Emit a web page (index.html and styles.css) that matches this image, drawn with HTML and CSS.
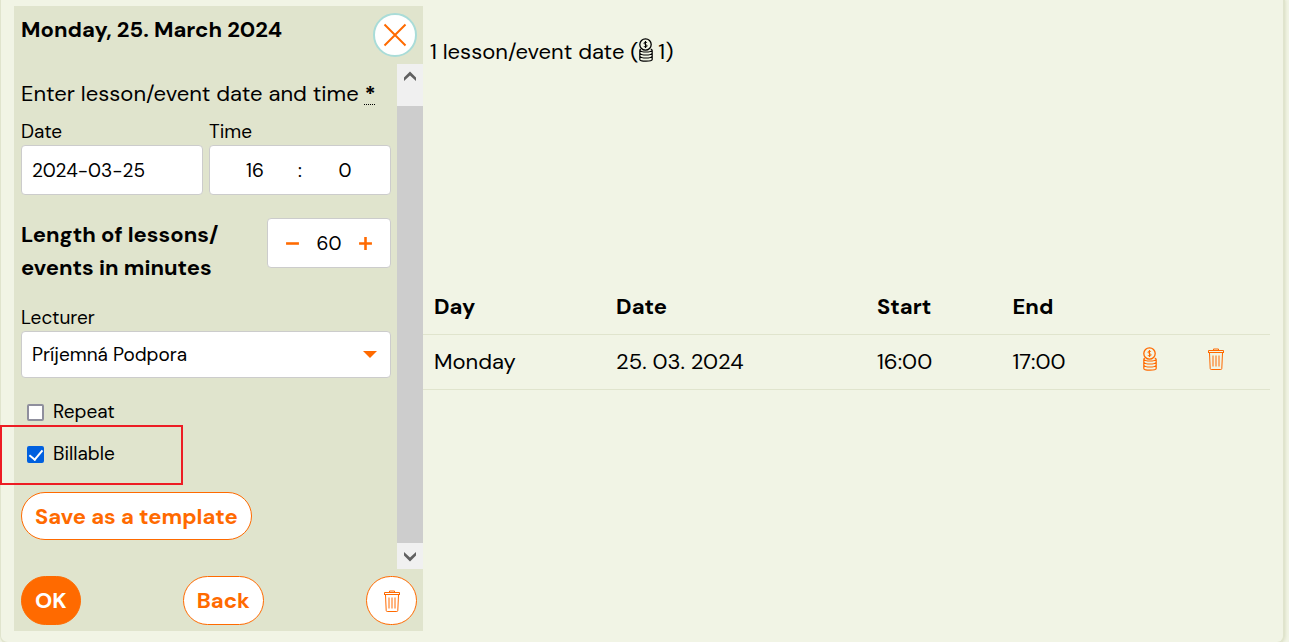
FILE: index.html
```html
<!DOCTYPE html>
<html lang="en">
<head>
  <meta charset="UTF-8" />
  <meta name="viewport" content="width=device-width, initial-scale=1" />
  <title>Lesson dates</title>
  <link rel="stylesheet" href="styles.css">
</head>
<body>
  <svg class="sprite" aria-hidden="true">
    <symbol id="trash" viewBox="0 0 18 22">
      <path d="M1 4.500h16M1.500 4.500V2.500h15v2M6.500 2.500V1h5v1.500M2.500 5l.7 15.500q.1 1 1 1h9.600q.9 0 1-1L15.500 5M6 7.500v11M9 7.500v11M12 7.500v11" />
    </symbol>
    <symbol id="coins" viewBox="0 0 14 24">
      <circle cx="6.500" cy="6.500" r="5.700" stroke-width="1.300" />
      <path d="M8 5q-.4-.9-1.500-.9-1.500 0-1.500 1.100 0 .9 1.500 1.300 1.600.4 1.600 1.400 0 1.100-1.600 1.100-1.200 0-1.600-.9M6.500 3v7" />
      <path stroke-width="1.200" d="M1.800 11q-1 .5-1 1.500v9q0 1.700 6.200 1.700t6.200-1.700v-9q0-1-1.500-1.500M1 12.500q1 1.500 6 1.500t6-1.500M1 15.500q1 1.500 6 1.500t6-1.500M1 18.500q1 1.500 6 1.500t6-1.500" />
    </symbol>
  </svg>

  <main class="card">
    <form class="editor">
      <header class="editor-header">
        <h2>Monday, 25. March 2024</h2>
        <button type="button" class="close-btn" aria-label="Close">
          <svg viewBox="0 0 24 24"><path d="M1.500 1.500l21 21M22.500 1.500l-21 21" /></svg>
        </button>
      </header>

      <div class="editor-body">
        <div class="fields">
          <p class="intro">Enter lesson/event date and time <abbr title="required">*</abbr></p>

          <div class="date-time">
            <div class="field">
              <label for="date">Date</label>
              <input type="text" id="date" class="box" value="2024-03-25" />
            </div>
            <div class="field">
              <label for="hour">Time</label>
              <div class="box time-box">
                <input type="text" id="hour" value="16" />
                <span>:</span>
                <input type="text" id="minute" value="0" aria-label="Minutes" />
              </div>
            </div>
          </div>

          <div class="length">
            <label for="length">Length of lessons/<br>events in minutes</label>
            <div class="box stepper">
              <button type="button" aria-label="Less">
                <svg viewBox="0 0 14 14"><path d="M1 7h12" /></svg>
              </button>
              <input type="text" id="length" value="60" />
              <button type="button" aria-label="More">
                <svg viewBox="0 0 14 14"><path d="M1 7h12M7 1v12" /></svg>
              </button>
            </div>
          </div>

          <div class="field lecturer">
            <label for="lecturer">Lecturer</label>
            <div class="select-wrap">
              <select id="lecturer">
                <option>Príjemná Podpora</option>
              </select>
            </div>
          </div>

          <div class="checks">
            <label><input type="checkbox" /> Repeat</label>
            <label><input type="checkbox" checked /> Billable</label>
          </div>

          <button type="button" class="btn">Save as a template</button>
        </div>

        <div class="scrollbar" aria-hidden="true">
          <svg viewBox="0 0 26 26"><path d="M7 13.500l6-6 6 6V17l-6-5.500L7 17z" /></svg>
          <div class="thumb"></div>
          <svg viewBox="0 0 26 26"><path d="M7 9l6 5.500L19 9v3.500l-6 6-6-6z" /></svg>
        </div>
      </div>

      <footer class="editor-footer">
        <button type="button" class="btn btn-primary">OK</button>
        <button type="button" class="btn">Back</button>
        <button type="button" class="btn btn-round" aria-label="Delete">
          <svg class="icon"><use href="#trash" /></svg>
        </button>
      </footer>
    </form>

    <section class="dates">
      <p class="summary">1 lesson/event date (<svg class="icon coins"><use href="#coins" /></svg> 1)</p>
      <table>
        <thead>
          <tr>
            <th class="col-day">Day</th>
            <th class="col-date">Date</th>
            <th class="col-start">Start</th>
            <th class="col-end">End</th>
            <th class="col-bill"></th>
            <th class="col-delete"></th>
          </tr>
        </thead>
        <tbody>
          <tr>
            <td>Monday</td>
            <td>25. 03. 2024</td>
            <td>16:00</td>
            <td>17:00</td>
            <td><button type="button" class="icon-btn" aria-label="Billable"><svg class="icon coins"><use href="#coins" /></svg></button></td>
            <td><button type="button" class="icon-btn" aria-label="Delete"><svg class="icon"><use href="#trash" /></svg></button></td>
          </tr>
        </tbody>
      </table>
    </section>

    <div class="highlight"></div>
  </main>
</body>
</html>
```
FILE: styles.css
```css
* {
  box-sizing: border-box;
}
body {
  margin: 0;
  background: #f1f4e5;
  color: #000;
  font-family: "DM Sans", Inter, sans-serif;
  font-size: 22px;
  line-height: 33px;
  overflow: hidden;
}
h2, p {
  margin: 0;
}
button, input, select {
  font-family: inherit;
  color: inherit;
}
button {
  cursor: pointer;
}
svg {
  display: block;
  fill: none;
  stroke: currentColor;
}
.sprite {
  display: none;
}
.card {
  position: relative;
  display: flex;
  align-items: flex-start;
  min-height: calc(100vh + 2px);
  margin-right: 4px;
  padding: 6px 13px;
  border: 1px solid #e0e4cd;
  border-width: 0 2px 2px 1px;
  border-radius: 0 0 8px 8px;
  box-shadow: 1px 0 3px #e0e4cd;
}

/* editor */
.editor {
  flex: 0 0 409px;
  background: #e0e4cd;
}
.editor-header {
  display: flex;
  justify-content: space-between;
  height: 58px;
  padding: 7px 6px 0 7px;
}
h2 {
  font-size: 22px;
  font-weight: 700;
}
.close-btn {
  display: flex;
  align-items: center;
  justify-content: center;
  width: 44px;
  height: 44px;
  padding: 0;
  border: 2px solid #a9dcd8;
  border-radius: 50%;
  background: #fff;
  color: #ff6a00;
}
.close-btn svg {
  width: 24px;
  height: 24px;
  stroke-width: 2;
}
.editor-body {
  display: flex;
}
.fields {
  flex: 1;
  padding: 13px 6px 29px 7px;
}
.intro abbr {
  font-weight: 700;
  text-decoration: underline dotted 1px;
  text-underline-offset: 3px;
}
.field {
  display: flex;
  flex-direction: column;
  flex: 1;
  min-width: 0;
}
.field label, .checks label {
  font-size: 19px;
  line-height: 28px;
}
.field label {
  padding-top: 1px;
  line-height: 27px;
}
.date-time {
  display: flex;
  gap: 6px;
  margin-top: 7px;
}
.box {
  width: 100%;
  height: 50px;
  padding: 0 10px;
  border: 1px solid #ccc;
  border-radius: 4px;
  background: #fff;
  font-size: 19px;
}
.time-box, .stepper {
  display: flex;
  align-items: center;
  justify-content: space-between;
}
.time-box input, .stepper input {
  width: 70px;
  padding: 0;
  border: 0;
  background: none;
  font-size: 19px;
  text-align: center;
}
.length {
  display: flex;
  justify-content: space-between;
  margin-top: 23px;
}
.length label {
  font-weight: 700;
}
.stepper {
  width: 124px;
  padding: 0 17px;
}
.stepper input {
  width: 40px;
}
.stepper button {
  padding: 0;
  border: 0;
  background: none;
  color: #ff6a00;
}
.stepper svg {
  width: 15px;
  height: 15px;
  stroke-width: 2.4;
}
.lecturer {
  margin-top: 19px;
}
.select-wrap {
  position: relative;
}
.select-wrap::after {
  content: "";
  position: absolute;
  top: 20px;
  right: 14px;
  border: 7px solid transparent;
  border-top-color: #ff6a00;
  border-bottom: 0;
  pointer-events: none;
}
select {
  display: block;
  width: 100%;
  height: 47px;
  padding: 0 10px;
  border: 1px solid #ccc;
  border-radius: 4px;
  background: #fff;
  font-size: 19px;
  appearance: none;
}
.checks {
  display: flex;
  flex-direction: column;
  align-items: flex-start;
  gap: 14px;
  margin: 20px 0 24px 6px;
}
.checks label {
  display: flex;
  align-items: center;
  gap: 9px;
}
.checks input {
  display: flex;
  justify-content: center;
  width: 17px;
  height: 17px;
  margin: 0;
  border: 2px solid #8f8f9d;
  border-radius: 2px;
  background: #fff;
  appearance: none;
}
.checks input:checked {
  border-color: #0060df;
  background: #0060df;
}
.checks input:checked::after {
  content: "";
  width: 6px;
  height: 11px;
  margin-top: -1px;
  border: solid #fff;
  border-width: 0 2px 2px 0;
  transform: rotate(40deg);
}
.btn {
  height: 48px;
  padding: 0 13px;
  border: 1px solid #ff6a00;
  border-radius: 24px;
  background: #fff;
  color: #ff6a00;
  font-size: 22px;
  font-weight: 700;
}
.scrollbar {
  display: flex;
  flex-direction: column;
  width: 26px;
  background: #f0f0f0;
}
.scrollbar svg {
  width: 26px;
  height: 26px;
  fill: #606060;
  stroke: none;
}
.thumb {
  flex: 1;
  margin-top: 16px;
  background: #cdcdcd;
}
.editor-footer {
  display: flex;
  justify-content: space-between;
  padding: 7px 6px 6px 7px;
}
.editor-footer .btn {
  height: 49px;
  border-radius: 25px;
}
.editor-footer .btn-primary {
  background: #ff6a00;
  color: #fff;
}
.editor-footer .btn-round {
  display: flex;
  align-items: center;
  justify-content: center;
  width: 51px;
  padding: 0;
}
.icon {
  width: 18px;
  height: 22px;
}
.coins {
  width: 14px;
  height: 24px;
}

/* list of dates */
.dates {
  flex: 1;
}
.summary {
  padding: 29px 7px 0;
}
.summary .icon {
  display: inline-block;
  vertical-align: -3px;
}
table {
  width: 100%;
  margin-top: 211px;
  border-collapse: collapse;
  table-layout: fixed;
}
th, td {
  height: 55px;
  padding: 0 11px;
  border-bottom: 1px solid #e0e4cd;
  text-align: left;
}
.col-day {
  width: 21.5%;
}
.col-date {
  width: 30.8%;
}
.col-start {
  width: 16%;
}
.col-end {
  width: 15.4%;
}
.col-bill {
  width: 7.6%;
}
.icon-btn {
  display: block;
  padding: 0 0 5px;
  border: 0;
  background: none;
  color: #ff6a00;
}

/* marks the Billable option */
.highlight {
  position: absolute;
  top: 425px;
  left: -1px;
  width: 183px;
  height: 60px;
  border: 2px solid #ed1c24;
  pointer-events: none;
}
```
